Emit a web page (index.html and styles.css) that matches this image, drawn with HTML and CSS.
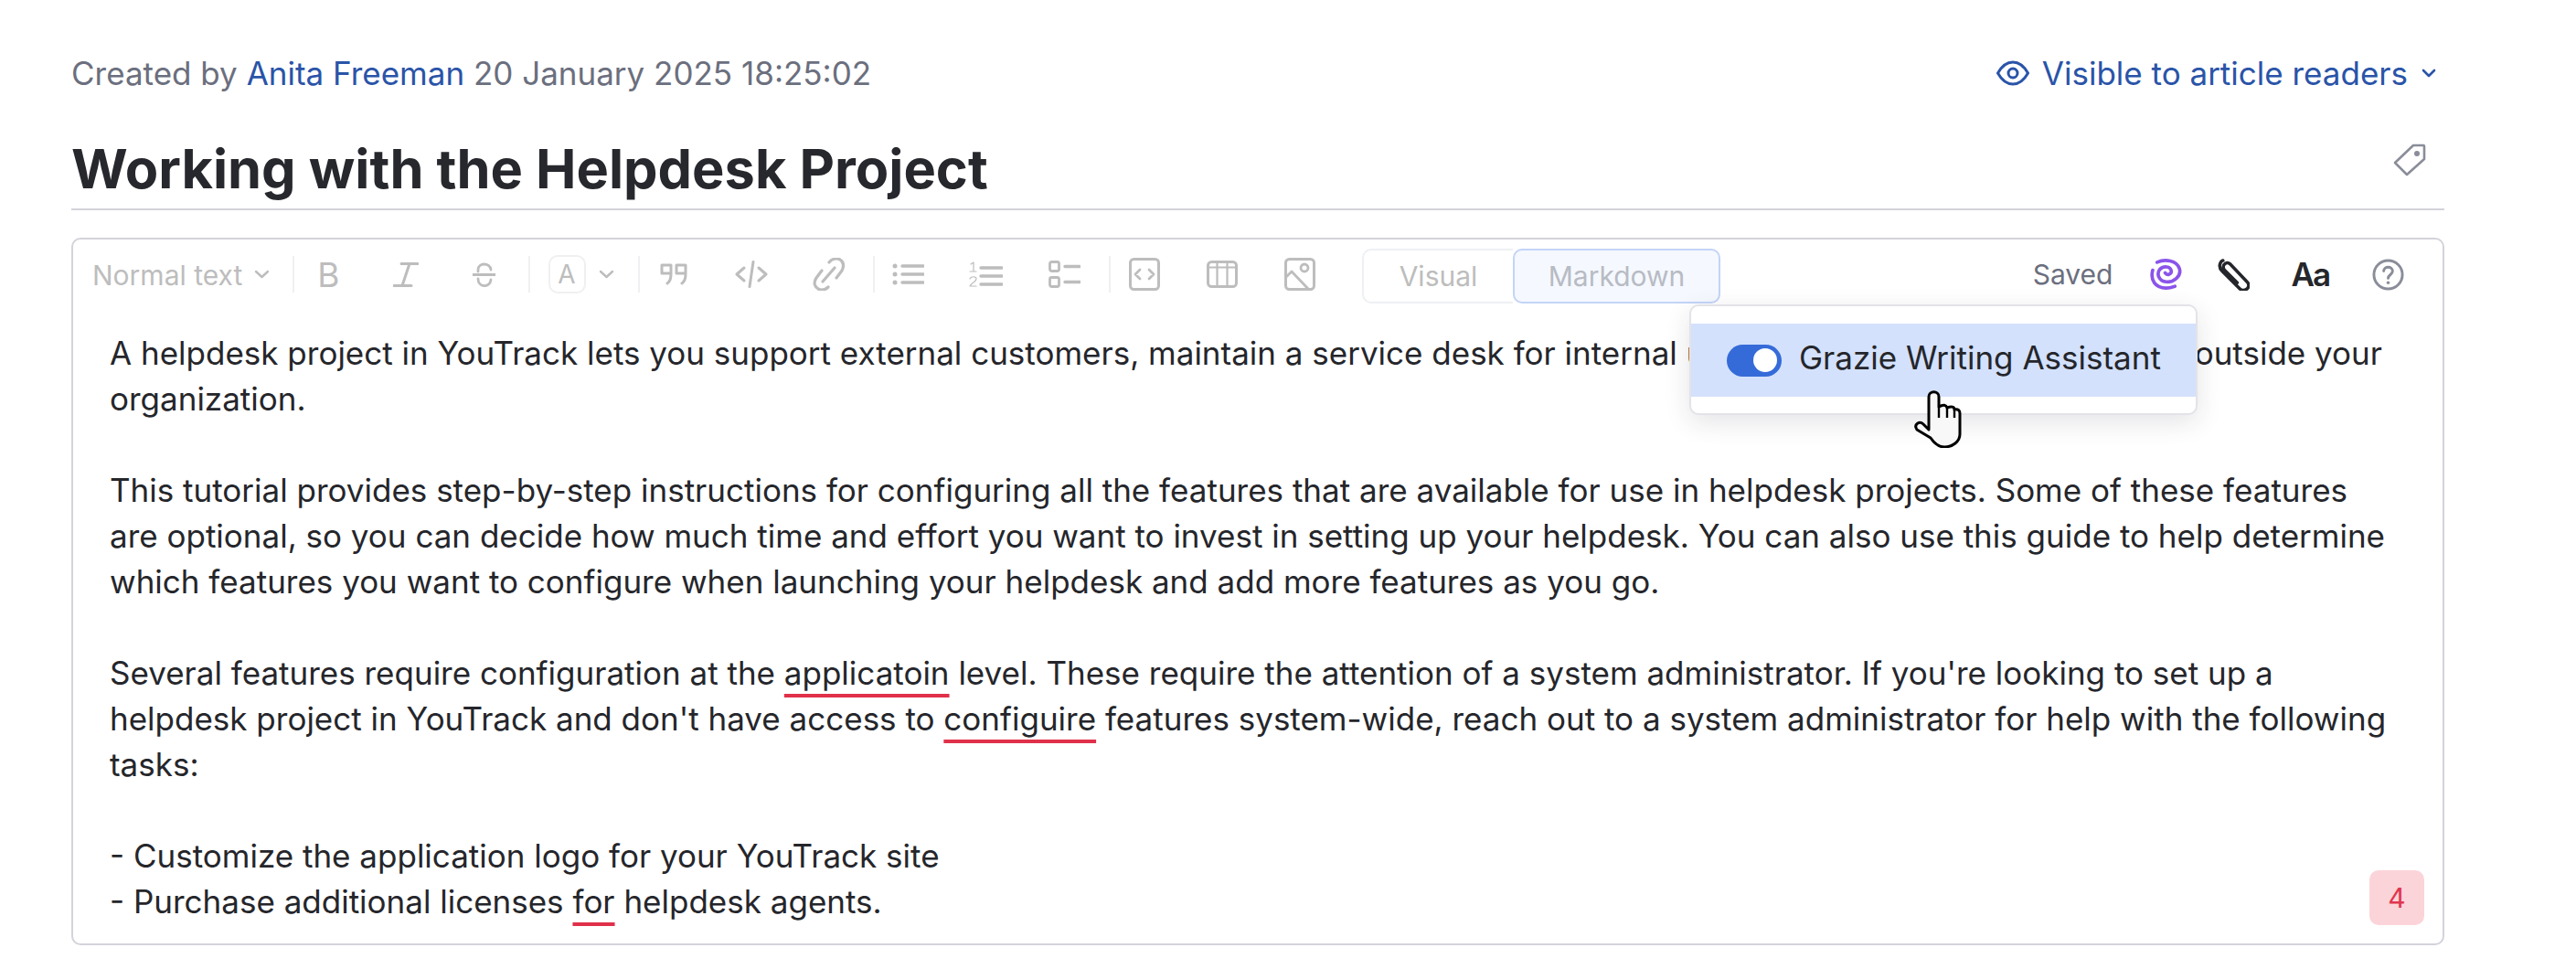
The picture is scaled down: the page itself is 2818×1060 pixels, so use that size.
FILE: index.html
```html
<!DOCTYPE html>
<html lang="en">
<head>
<meta charset="utf-8">
<title>Working with the Helpdesk Project</title>
<link rel="stylesheet" href="styles.css">
</head>
<body>
<div class="page">
  <header class="meta">
    <div class="created">Created by <a class="link">Anita Freeman</a> 20 January 2025 18:25:02</div>
    <div class="visibility">
      <svg class="eye" viewBox="0 0 36 28" fill="none" stroke="currentColor" stroke-width="3"><path d="M1.5 14C6 6 11 2 18 2s12 4 16.500 12C30 22 25 26 18 26S6 22 1.500 14z"/><circle cx="18" cy="14" r="5"/></svg>
      <span>Visible to article readers</span>
      <svg class="chev-blue" viewBox="0 0 16 10" fill="none" stroke="currentColor" stroke-width="2.6" stroke-linecap="round" stroke-linejoin="round"><path d="M2 2l6 6 6-6"/></svg>
    </div>
  </header>
  <div class="title-row">
    <h1 class="title">Working with the Helpdesk Project</h1>
    <svg class="tag" viewBox="0 0 36 36" fill="none" stroke="#8a8d99" stroke-width="2.6" stroke-linejoin="round"><path d="M22 2h11a1 1 0 0 1 1 1v14L15 34 2 21z"/><circle cx="26" cy="11" r="3" fill="#8a8d99" stroke="none"/></svg>
  </div>
  <section class="editor">
    <div class="toolbar">
      <div class="tools">
        <span class="style-select">Normal text</span>
        <svg class="chev" viewBox="0 0 17 10"><path d="M2 2l6.500 6 6.500-6"/></svg>
        <i class="sep sep-a"></i>
        <span class="glyph-b">B</span>
        <svg class="ic ic-i" viewBox="0 0 28 27"><path d="M9 1.500h18M18 1.500L10 25.500M1 25.500h19" stroke-width="3"/></svg>
        <svg class="ic ic-s" viewBox="0 0 25 27"><path d="M20 8C19 0 6 0 6 8v2M0 13.500h25M6 18c0 10 13 10 14 1" stroke-width="2.800"/></svg>
        <i class="sep sep-b"></i>
        <span class="color-box">A</span>
        <svg class="chev chev-color" viewBox="0 0 17 10"><path d="M2 2l6.500 6 6.500-6"/></svg>
        <i class="sep sep-c"></i>
        <svg class="ic ic-q" viewBox="0 0 30 24"><path d="M2 2h10v10c0 5-1 8-4 10M2 2v9h10M18 2h10v10c0 5-1 8-4 10M18 2v9h10" stroke-width="3"/></svg>
        <svg class="ic ic-code" viewBox="0 0 36 30"><path d="M10 8L2 15l8 7M26 8l8 7-8 7M20 1.500l-4 27" stroke-width="3"/></svg>
        <svg class="ic ic-link" viewBox="0 0 36 36"><path d="M10 14L4 22c-4 6-1 10 2 12 4 2 8 1 11-2M26 22l6-8c3-6 1-10-2-12-4-2-9-1-12 3M11 26L24 11" stroke-width="3.200"/></svg>
        <i class="sep sep-d"></i>
        <svg class="ic ic-list" viewBox="0 0 35 24"><path d="M11 3h23M11 12h23M11 21h23" stroke-width="3.400"/><circle cx="3" cy="3" r="2.500" class="dot"/><circle cx="3" cy="12" r="2.500" class="dot"/><circle cx="3" cy="21" r="2.500" class="dot"/></svg>
        <svg class="ic ic-ol" viewBox="0 0 37 28"><path d="M13 7h23M13 16h23M13 25h23" stroke-width="3.400"/><path d="M2 3l3-2v10M1 11h7M1 19c1-3 7-3 7 0 0 3-6 5-7 8h7" stroke-width="1.200"/></svg>
        <svg class="ic ic-check" viewBox="0 0 35 30"><rect x="1.500" y="1.500" width="10" height="10" rx="2" stroke-width="2.800"/><rect x="1.500" y="18.500" width="10" height="10" rx="2" stroke-width="2.800"/><path d="M18 6.500h16M18 23.500h16" stroke-width="3.400"/></svg>
        <i class="sep sep-e"></i>
        <svg class="ic ic-cb" viewBox="0 0 34 36"><rect x="1.500" y="1.500" width="31" height="33" rx="4" stroke-width="3"/><path d="M12 13l-5 5 5 5M22 13l5 5-5 5" stroke-width="2.800"/></svg>
        <svg class="ic ic-table" viewBox="0 0 34 30"><rect x="1.500" y="1.500" width="31" height="27" rx="4" stroke-width="3"/><path d="M2 7.500h30M11.500 2v26M22.500 2v26" stroke-width="2.200"/></svg>
        <svg class="ic ic-img" viewBox="0 0 34 36"><rect x="1.500" y="1.500" width="31" height="33" rx="4" stroke-width="3"/><circle cx="22" cy="11" r="4" stroke-width="2.800"/><path d="M2 21l6-6 19 20" stroke-width="2.800"/></svg>
      </div>
      <div class="mode-switch">
        <span class="mode">Visual</span>
        <span class="mode mode-active">Markdown</span>
      </div>
      <div class="tools-right">
        <span class="saved">Saved</span>
        <svg class="rt rt-spiral" viewBox="0 0 36 36" fill="none" stroke="#8b54ea" stroke-width="3.800" stroke-linecap="round"><path d="M8 4C17 0 30 2 33 11c3 9-7 16-15 15C10 25 7 17 11 12c4-4 12-4 13 2 0 4-5 5-7 2"/><path d="M3 13C0 24 6 33 18 33c4 0 7-1 10-2"/></svg>
        <svg class="rt rt-clip" viewBox="0 0 36 36" fill="none" stroke="#25262b" stroke-width="3.600" stroke-linecap="round"><path d="M22 27L8 13c-2-2-2-4-1-6 2-3 5-3 7-1l19 20c3 3 2 6 0 8-3 2-6 2-8 0L5 14C0 9 3 3 6 2"/></svg>
        <span class="aa">Aa</span>
        <svg class="rt rt-help" viewBox="0 0 36 36" fill="none" stroke="#8a8d99" stroke-width="3"><circle cx="18" cy="18" r="16"/><path d="M13 14c0-6 10-6 10 0 0 4-5 4-5 8" stroke-linecap="round"/><circle cx="18" cy="27" r="1.800" fill="#8a8d99" stroke="none"/></svg>
      </div>
    </div>
    <div class="content">
      <p>A helpdesk project in YouTrack lets you support external customers, maintain a service desk for internal users, or schedule requests from outside your<br>organization.</p>
      <p>This tutorial provides step-by-step instructions for configuring all the features that are available for use in helpdesk projects. Some of these features<br>are optional, so you can decide how much time and effort you want to invest in setting up your helpdesk. You can also use this guide to help determine<br>which features you want to configure when launching your helpdesk and add more features as you go.</p>
      <p>Several features require configuration at the <span class="typo">applicatoin</span> level. These require the attention of a system administrator. If you're looking to set up a<br>helpdesk project in YouTrack and don't have access to <span class="typo">configuire</span> features system-wide, reach out to a system administrator for help with the following<br>tasks:</p>
      <p>- Customize the application logo for your YouTrack site<br>- Purchase additional licenses <span class="typo">for</span> helpdesk agents.</p>
    </div>
    <div class="badge">4</div>
    <div class="popup">
      <div class="popup-row">
        <span class="toggle"><i class="knob"></i></span>
        <span class="popup-label">Grazie Writing Assistant</span>
      </div>
    </div>
    <svg class="cursor" viewBox="0 0 52 63"><path d="M16 7c0-7 11-7 11 0V18c5-3 8-2 9 1 5-2 8-1 8 2 4-1 6 1 6 4V48c0 8-8 14-17 14-7 0-11-4-15-10L3 43c-4-6 3-10 7-6l6 6z" fill="#f8f8f8" stroke="#000" stroke-width="3" stroke-linejoin="round"/><path d="M27 18v12M36 19v11M44 21v9" stroke="#000" stroke-width="2.400" fill="none"/></svg>
  </section>
</div>
</body>
</html>
```
FILE: styles.css
```css
* { box-sizing: border-box; }
html, body { margin: 0; background: #fff; }
body { font-family: Inter, "Noto Sans", sans-serif; color: #25262b; width: 2818px; height: 1060px; overflow: hidden; }
.page { padding: 60px 0 0 78px; width: 2674px; }

.meta { display: flex; justify-content: space-between; align-items: center; height: 40px; font-size: 35px; color: #6b6f7e; padding-right: 9px; }
.link { color: #2a54a8; }
.visibility { display: flex; align-items: center; color: #2a54a8; }
.eye { width: 36px; height: 28px; margin-right: 14px; }
.chev-blue { width: 16px; height: 10px; margin-left: 15px; }

.title-row { display: flex; align-items: center; justify-content: space-between; height: 90px; margin-top: 40px; border-bottom: 2px solid #d3d3db; padding-right: 20px; }
.title { margin: 0; font-size: 59.500px; font-weight: 700; line-height: 70px; color: #27282d; }
.tag { width: 36px; height: 36px; margin-bottom: 19px; }

.editor { position: relative; height: 774px; margin-top: 30px; border: 2px solid #d3d3db; border-radius: 10px; overflow: hidden; }

.toolbar { display: flex; align-items: center; height: 76px; padding: 0 0 0 21px; }
.tools { display: flex; align-items: center; height: 100%; color: #bdbdbd; width: 1389px; flex: none; }
.tools svg { fill: none; stroke: #bdbdbd; stroke-linecap: round; stroke-linejoin: round; flex: none; }
.tools .dot { fill: #bdbdbd; stroke: none; }
.style-select { font-size: 30px; padding-top: 2px; }
.chev { width: 17px; height: 10px; stroke-width: 2.400; margin-left: 13px; }
.sep { width: 2px; height: 40px; background: #f0f0f2; flex: none; }
.sep-a { margin-left: 25px; }
.glyph-b { font-size: 37px; margin-left: 25px; line-height: 1; }
.ic-i { width: 28px; height: 27px; margin-left: 58px; }
.ic-s { width: 25px; height: 27px; margin-left: 59px; }
.sep-b { margin-left: 36px; }
.color-box { display: flex; align-items: center; justify-content: center; width: 41px; height: 42px; margin-left: 20px; border: 2px solid #f0f0f2; border-radius: 10px; font-size: 28px; flex: none; }
.chev-color { margin-left: 14px; }
.sep-c { margin-left: 26px; }
.ic-q { width: 30px; height: 24px; margin-left: 22px; }
.ic-code { width: 36px; height: 30px; margin-left: 52px; }
.ic-link { width: 36px; height: 36px; margin-left: 49px; }
.sep-d { margin-left: 30px; }
.ic-list { width: 35px; height: 24px; margin-left: 19px; }
.ic-ol { width: 37px; height: 28px; margin-left: 49px; }
.ic-check { width: 35px; height: 30px; margin-left: 50px; }
.sep-e { margin-left: 31px; }
.ic-cb { width: 34px; height: 36px; margin-left: 20px; }
.ic-table { width: 34px; height: 30px; margin-left: 51px; }
.ic-img { width: 34px; height: 36px; margin-left: 51px; }

.mode-switch { display: flex; height: 60px; margin-top: 4px; font-size: 30px; color: #bdbdbd; }
.mode { display: flex; align-items: center; justify-content: center; height: 60px; border: 2px solid #eef0f4; }
.mode:first-child { width: 165px; border-right: 0; border-radius: 10px 0 0 10px; }
.mode-active { width: 227px; background: #f5f8fe; border: 2px solid #c3d4f7; border-radius: 10px; color: #b7bbc4; }

.tools-right { display: flex; align-items: center; margin-left: auto; padding-right: 42px; }
.saved { font-size: 30px; color: #6b6f7e; }
.rt { width: 35px; height: 35px; flex: none; }
.rt-spiral { margin-left: 41px; }
.rt-clip { margin-left: 39px; }
.aa { font-size: 35px; font-weight: 600; color: #25262b; margin-left: 45px; letter-spacing: -2px; }
.rt-help { margin-left: 47px; }

.content { padding: 23px 40px 0 40px; font-size: 35px; line-height: 50px; white-space: nowrap; color: #25262b; }
.content p { margin: 0 0 50px; }
.typo { text-decoration: underline #e0304a 4px; text-underline-offset: 10px; text-decoration-skip-ink: none; }

.badge { position: absolute; right: 20px; bottom: 20px; display: flex; align-items: center; justify-content: center; width: 60px; height: 60px; border-radius: 10px; background: #fbd4d9; color: #e0364f; font-size: 30px; }

.popup { position: absolute; left: 1768px; top: 71px; width: 556px; height: 121px; padding-top: 19px; background: #fff; border: 2px solid #e3e3e8; border-radius: 10px; box-shadow: 0 8px 28px rgba(30, 35, 60, 0.12); }
.popup-row { display: flex; align-items: center; height: 80px; padding-left: 39px; background: #d3e1fc; font-size: 35px; color: #25262b; }
.popup-label { padding-bottom: 7px; }
.toggle { display: flex; align-items: center; justify-content: flex-end; width: 60px; height: 35px; margin-right: 19px; padding-right: 5px; border-radius: 18px; background: #356bd8; flex: none; }
.knob { width: 26px; height: 26px; border-radius: 50%; background: #fff; }
.cursor { position: absolute; left: 2014px; top: 165px; width: 52px; height: 63px; }
```
